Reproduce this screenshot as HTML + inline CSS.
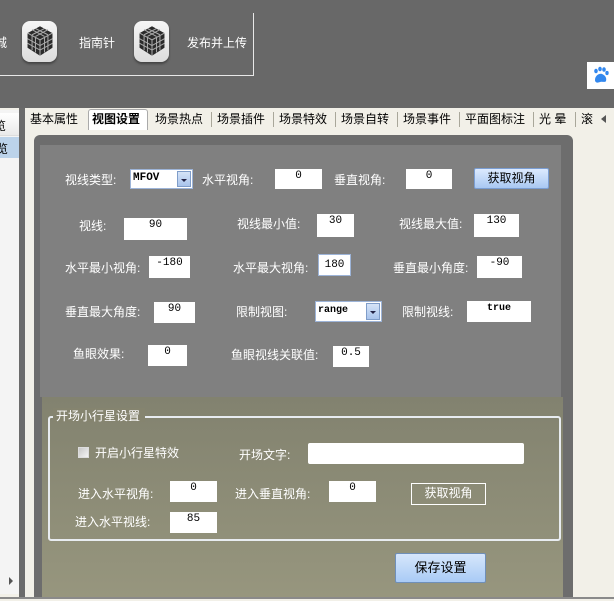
<!DOCTYPE html>
<html><head><meta charset="utf-8"><style>
*{margin:0;padding:0;box-sizing:border-box}
body{width:614px;height:601px;overflow:hidden;background:#f2f0e8;position:relative;font-family:"Liberation Sans","Noto Sans CJK SC","WenQuanYi Zen Hei",sans-serif;font-size:12px}
.a{position:absolute}
.lbl{position:absolute;color:#fff;font-size:12px;line-height:14px;white-space:nowrap}
.in{position:absolute;background:#fff;color:#000;font-family:"Liberation Mono",monospace;font-size:11px;text-align:center;line-height:13px;padding-top:1px}
.tab{position:absolute;top:110px;height:19px;font-size:12px;line-height:18px;color:#000;white-space:nowrap}
.sep{position:absolute;top:112px;width:1px;height:15px;background:#a9a79a}
.ico{position:absolute;width:35px;height:41px;border-radius:8px;background:linear-gradient(#f6f6f6,#dcdcdc);box-shadow:0 2px 2px #444}
</style></head><body>
<div class="a" style="left:0;top:0;width:614px;height:108px;background:#686868"></div>
<div class="a" style="left:0;top:75px;width:254px;height:1px;background:#e8e8e8"></div>
<div class="a" style="left:253px;top:13px;width:1px;height:63px;background:#e8e8e8"></div>
<div class="lbl" style="left:-5px;top:36px">城</div>
<div class="ico" style="left:22px;top:21px"></div>
<svg class="a" style="left:25px;top:24px" width="30" height="34" viewBox="0 0 26 30"><path d="M13 2 L24 8 L24 21 L13 28 L2 21 L2 8Z" fill="#2a2a2a"/><path d="M2 8 L13 14 L24 8 M13 14 V28 M6 10 V23 M9 12 V25 M17 12 V25 M20 10 V23 M2 13 L13 19 L24 13 M2 17 L13 23 L24 17 M6 5 L17 11 M9 4 L20 9.5 M20 5 L9 11 M17 4 L6 9.5" stroke="#aaa" stroke-width="0.9" fill="none"/></svg>
<div class="lbl" style="left:79px;top:36px">指南针</div>
<div class="ico" style="left:134px;top:21px"></div>
<svg class="a" style="left:137px;top:24px" width="30" height="34" viewBox="0 0 26 30"><path d="M13 2 L24 8 L24 21 L13 28 L2 21 L2 8Z" fill="#2a2a2a"/><path d="M2 8 L13 14 L24 8 M13 14 V28 M6 10 V23 M9 12 V25 M17 12 V25 M20 10 V23 M2 13 L13 19 L24 13 M2 17 L13 23 L24 17 M6 5 L17 11 M9 4 L20 9.5 M20 5 L9 11 M17 4 L6 9.5" stroke="#aaa" stroke-width="0.9" fill="none"/></svg>
<div class="lbl" style="left:187px;top:36px">发布并上传</div>
<div class="a" style="left:587px;top:62px;width:27px;height:27px;background:#fff"></div>
<svg class="a" style="left:592px;top:66px" width="18" height="18" viewBox="0 0 18 18" fill="#3388ee"><ellipse cx="4" cy="5" rx="1.8" ry="2.3"/><ellipse cx="8" cy="3" rx="1.8" ry="2.3"/><ellipse cx="12" cy="3.5" rx="1.8" ry="2.3"/><ellipse cx="15" cy="7" rx="1.7" ry="2.1"/><path d="M3 14 C3 9 8 7 10 8 C13 9 15 12 14 15 C13 17 10 15 8 16 C6 17 3 17 3 14Z"/></svg>
<div class="a" style="left:0;top:110px;width:19px;height:484px;background:#f4f4f4"></div>
<div class="a" style="left:0;top:113px;width:19px;height:23px;background:linear-gradient(#fff,#eaeaea);border-bottom:1px solid #ddd"></div>
<div class="a" style="left:-6px;top:117px;font-size:12px">览</div>
<div class="a" style="left:0;top:137px;width:19px;height:21px;background:#bcd3ea"></div>
<div class="a" style="left:-4px;top:140px;font-size:12px">览</div>
<div class="a" style="left:9px;top:577px;width:0;height:0;border-left:4px solid #555;border-top:4px solid transparent;border-bottom:4px solid transparent"></div>
<div class="a" style="left:19px;top:108px;width:6px;height:490px;background:#6b6b6b"></div>
<div class="a" style="left:0;top:597px;width:614px;height:2px;background:#8a8a8a"></div>
<div class="tab" style="left:30px">基本属性</div>
<div class="a" style="left:88px;top:109px;width:60px;height:21px;background:#fff;border:1px solid #aaa;border-bottom:none;border-radius:3px 3px 0 0"></div>
<div class="tab" style="left:92px;font-weight:bold">视图设置</div>
<div class="tab" style="left:155px">场景热点</div><div class="sep" style="left:211px"></div>
<div class="tab" style="left:217px">场景插件</div><div class="sep" style="left:273px"></div>
<div class="tab" style="left:279px">场景特效</div><div class="sep" style="left:335px"></div>
<div class="tab" style="left:341px">场景自转</div><div class="sep" style="left:397px"></div>
<div class="tab" style="left:403px">场景事件</div><div class="sep" style="left:459px"></div>
<div class="tab" style="left:465px">平面图标注</div><div class="sep" style="left:533px"></div>
<div class="tab" style="left:539px">光 晕</div><div class="sep" style="left:575px"></div>
<div class="tab" style="left:581px">滚</div>
<div class="a" style="left:601px;top:115px;width:0;height:0;border-right:5px solid #555;border-top:4px solid transparent;border-bottom:4px solid transparent"></div>
<div class="a" style="left:34px;top:135px;width:539px;height:462px;background:#6d6d6d;border-radius:6px 6px 0 0"></div>
<div class="a" style="left:40px;top:145px;width:521px;height:252px;background:#808080"></div>
<div class="a" style="left:42px;top:397px;width:521px;height:200px;background:linear-gradient(#82826f,#97967e)"></div>
<div class="lbl" style="left:65px;top:173px">视线类型:</div>
<div class="a" style="left:130px;top:169px;width:63px;height:20px;background:#fff;border:1px solid #9db4d8"></div>
<div class="a" style="left:133px;top:172px;font-family:'Liberation Mono',monospace;font-size:11px;font-weight:bold">MFOV</div>
<div class="a" style="left:177px;top:171px;width:14px;height:16px;background:linear-gradient(#d5e3f7,#a9c4ec);border:1px solid #7f9dc9"></div>
<div class="a" style="left:181px;top:179px;border-top:3px solid #224;border-left:3px solid transparent;border-right:3px solid transparent"></div>
<div class="lbl" style="left:202px;top:173px">水平视角:</div>
<div class="in" style="left:275px;top:169px;width:47px;height:20px">0</div>
<div class="lbl" style="left:334px;top:173px">垂直视角:</div>
<div class="in" style="left:406px;top:169px;width:46px;height:20px">0</div>
<div class="a" style="left:474px;top:168px;width:75px;height:21px;background:linear-gradient(#dceaff,#a9c8f2);border:1px solid #7b9ed3;border-radius:2px;text-align:center;line-height:19px;font-size:12px">获取视角</div>
<div class="lbl" style="left:79px;top:219px">视线:</div>
<div class="in" style="left:124px;top:218px;width:63px;height:22px">90</div>
<div class="lbl" style="left:237px;top:217px">视线最小值:</div>
<div class="in" style="left:317px;top:214px;width:37px;height:23px">30</div>
<div class="lbl" style="left:399px;top:217px">视线最大值:</div>
<div class="in" style="left:474px;top:214px;width:45px;height:23px">130</div>
<div class="lbl" style="left:65px;top:261px">水平最小视角:</div>
<div class="in" style="left:149px;top:256px;width:41px;height:22px">-180</div>
<div class="lbl" style="left:233px;top:261px">水平最大视角:</div>
<div class="in" style="left:318px;top:254px;width:33px;height:22px;border:1px solid #9db4d8;line-height:18px">180</div>
<div class="lbl" style="left:393px;top:261px">垂直最小角度:</div>
<div class="in" style="left:477px;top:256px;width:45px;height:22px">-90</div>
<div class="lbl" style="left:65px;top:305px">垂直最大角度:</div>
<div class="in" style="left:154px;top:302px;width:41px;height:21px">90</div>
<div class="lbl" style="left:236px;top:305px">限制视图:</div>
<div class="a" style="left:315px;top:301px;width:67px;height:21px;background:#fff;border:1px solid #9db4d8"></div>
<div class="a" style="left:318px;top:305px;font-family:'Liberation Mono',monospace;font-size:10px;font-weight:bold">range</div>
<div class="a" style="left:366px;top:303px;width:14px;height:17px;background:linear-gradient(#d5e3f7,#a9c4ec);border:1px solid #7f9dc9"></div>
<div class="a" style="left:370px;top:311px;border-top:3px solid #224;border-left:3px solid transparent;border-right:3px solid transparent"></div>
<div class="lbl" style="left:402px;top:305px">限制视线:</div>
<div class="in" style="left:467px;top:301px;width:64px;height:21px;font-size:10px;font-weight:bold">true</div>
<div class="lbl" style="left:73px;top:347px">鱼眼效果:</div>
<div class="in" style="left:148px;top:345px;width:39px;height:21px">0</div>
<div class="lbl" style="left:231px;top:348px">鱼眼视线关联值:</div>
<div class="in" style="left:333px;top:346px;width:36px;height:21px">0.5</div>
<div class="a" style="left:48px;top:416px;width:513px;height:125px;border:2px solid #e8ecf0;border-radius:3px"></div>
<div class="a" style="left:53px;top:408px;width:92px;height:14px;background:#85846f"></div>
<div class="lbl" style="left:56px;top:409px">开场小行星设置</div>
<div class="a" style="left:78px;top:447px;width:11px;height:11px;background:linear-gradient(135deg,#c8c8c8,#f4f4f4);border:1px solid #ddd"></div>
<div class="lbl" style="left:95px;top:446px">开启小行星特效</div>
<div class="lbl" style="left:239px;top:448px">开场文字:</div>
<div class="a" style="left:308px;top:443px;width:216px;height:21px;background:#fff;border-radius:2px"></div>
<div class="lbl" style="left:78px;top:487px">进入水平视角:</div>
<div class="in" style="left:170px;top:481px;width:47px;height:21px">0</div>
<div class="lbl" style="left:235px;top:487px">进入垂直视角:</div>
<div class="in" style="left:329px;top:481px;width:47px;height:21px">0</div>
<div class="a" style="left:411px;top:483px;width:75px;height:22px;border:1px solid #fff;color:#fff;text-align:center;line-height:19px">获取视角</div>
<div class="lbl" style="left:75px;top:515px">进入水平视线:</div>
<div class="in" style="left:170px;top:512px;width:47px;height:21px">85</div>
<div class="a" style="left:395px;top:553px;width:91px;height:30px;background:linear-gradient(#d6e6fb,#a9cbf5);border:1px solid #6f8fb8;border-radius:2px;text-align:center;line-height:28px;font-size:13px">保存设置</div>
</body></html>
